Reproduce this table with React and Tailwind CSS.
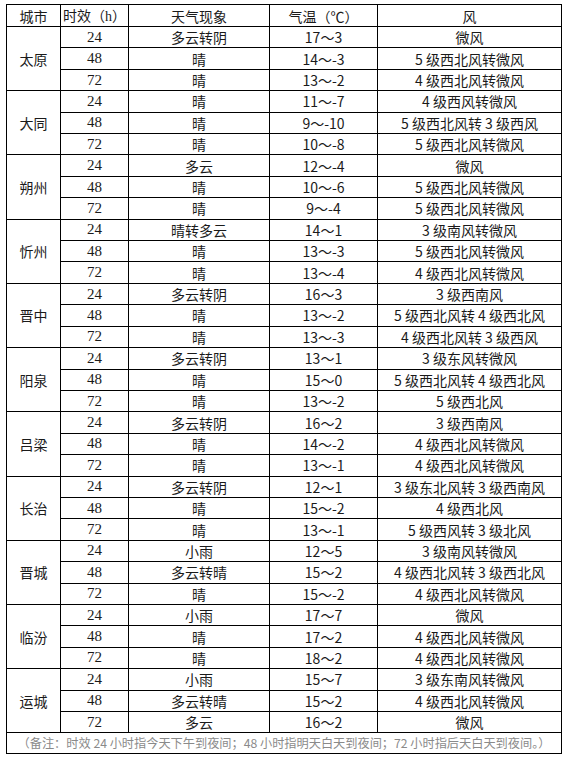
import React from 'react';

// 各城市三天预报，顺序：时效、天气现象、气温、风
const forecast = [
  { city: '太原', rows: [
    ['24', '多云转阴', '17～3', '微风'],
    ['48', '晴', '14～-3', '5 级西北风转微风'],
    ['72', '晴', '13～-2', '4 级西北风转微风'],
  ] },
  { city: '大同', rows: [
    ['24', '晴', '11～-7', '4 级西风转微风'],
    ['48', '晴', '9～-10', '5 级西北风转 3 级西风'],
    ['72', '晴', '10～-8', '5 级西北风转微风'],
  ] },
  { city: '朔州', rows: [
    ['24', '多云', '12～-4', '微风'],
    ['48', '晴', '10～-6', '5 级西北风转微风'],
    ['72', '晴', '9～-4', '5 级西北风转微风'],
  ] },
  { city: '忻州', rows: [
    ['24', '晴转多云', '14～1', '3 级南风转微风'],
    ['48', '晴', '13～-3', '5 级西北风转微风'],
    ['72', '晴', '13～-4', '4 级西北风转微风'],
  ] },
  { city: '晋中', rows: [
    ['24', '多云转阴', '16～3', '3 级西南风'],
    ['48', '晴', '13～-2', '5 级西北风转 4 级西北风'],
    ['72', '晴', '13～-3', '4 级西北风转 3 级西风'],
  ] },
  { city: '阳泉', rows: [
    ['24', '多云转阴', '13～1', '3 级东风转微风'],
    ['48', '晴', '15～0', '5 级西北风转 4 级西北风'],
    ['72', '晴', '13～-2', '5 级西北风'],
  ] },
  { city: '吕梁', rows: [
    ['24', '多云转阴', '16～2', '3 级西南风'],
    ['48', '晴', '14～-2', '4 级西北风转微风'],
    ['72', '晴', '13～-1', '4 级西北风转微风'],
  ] },
  { city: '长治', rows: [
    ['24', '多云转阴', '12～1', '3 级东北风转 3 级西南风'],
    ['48', '晴', '15～-2', '4 级西北风'],
    ['72', '晴', '13～-1', '5 级西风转 3 级北风'],
  ] },
  { city: '晋城', rows: [
    ['24', '小雨', '12～5', '3 级南风转微风'],
    ['48', '多云转晴', '15～2', '4 级西北风转 3 级西北风'],
    ['72', '晴', '15～-2', '4 级西北风转微风'],
  ] },
  { city: '临汾', rows: [
    ['24', '小雨', '17～7', '微风'],
    ['48', '晴', '17～2', '4 级西北风转微风'],
    ['72', '晴', '18～2', '4 级西北风转微风'],
  ] },
  { city: '运城', rows: [
    ['24', '小雨', '15～7', '3 级东南风转微风'],
    ['48', '多云转晴', '15～2', '4 级西北风转微风'],
    ['72', '多云', '16～2', '微风'],
  ] },
];

const cjk = "font-['Noto_Sans_CJK_SC',sans-serif]";
const serif = "font-['Liberation_Serif','Noto_Sans_CJK_SC',serif]";
const cell = 'border border-black p-0 text-center align-middle leading-none';

export default function App() {
  return (
    <div className={`bg-white w-[565px] h-[759px] pt-[4px] pl-[6px] text-[14px] text-[#1a1a1a] ${cjk}`}>
      <table className="border-collapse table-fixed w-[555px] border border-black">
        <colgroup>
          <col className="w-[54px]" />
          <col className="w-[68px]" />
          <col className="w-[141px]" />
          <col className="w-[108px]" />
          <col className="w-[184px]" />
        </colgroup>
        <thead>
          <tr className="h-[22px]">
            <th className={`${cell} font-normal`}>城市</th>
            <th className={`${cell} font-normal`}>
              时效（<span className={serif}>h</span>）
            </th>
            <th className={`${cell} font-normal`}>天气现象</th>
            <th className={`${cell} font-normal`}>气温（℃）</th>
            <th className={`${cell} font-normal`}>风</th>
          </tr>
        </thead>
        <tbody>
          {forecast.map(group =>
            group.rows.map((row, i) => (
              <tr key={group.city + row[0]} className="h-[21.42px]">
                {i === 0 && (
                  <td rowSpan={3} className={cell}>{group.city}</td>
                )}
                <td className={`${cell} ${serif} text-[15px]`}>{row[0]}</td>
                <td className={cell}>{row[1]}</td>
                <td className={cell}>{row[2]}</td>
                <td className={cell}>{row[3]}</td>
              </tr>
            ))
          )}
          <tr className="h-[21px]">
            <td colSpan={5} className={`${cell} text-[12.2px] whitespace-nowrap text-[#8a8a8a]`}>
              （备注：时效 24 小时指今天下午到夜间；48 小时指明天白天到夜间；72 小时指后天白天到夜间。）
            </td>
          </tr>
        </tbody>
      </table>
    </div>
  );
}
